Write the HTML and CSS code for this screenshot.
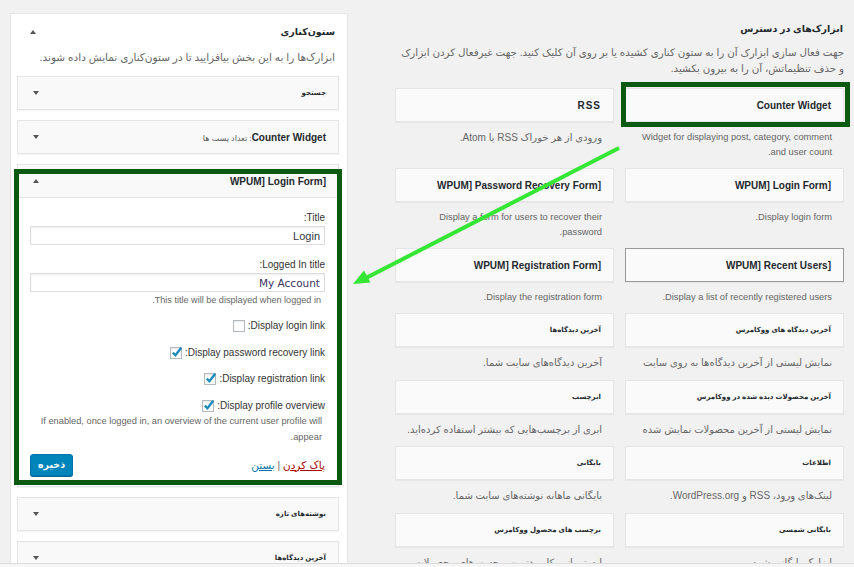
FILE: index.html
```html
<!DOCTYPE html>
<html lang="fa" dir="rtl">
<head>
  <meta charset="UTF-8">
  <meta name="viewport" content="width=device-width, initial-scale=1.0">
  <title>ابزارک‌ها</title>
  <link rel="stylesheet" href="styles.css">
</head>
<body>
  <div class="wrap">

    <!-- ابزارک‌های در دسترس -->
    <div class="available">
      <h2>ابزارک‌های در دسترس</h2>
      <p class="intro">جهت فعال سازی ابزارک آن را به ستون کناری کشیده یا بر روی آن کلیک کنید. جهت غیرفعال کردن ابزارک و حذف تنظیماتش، آن را به بیرون بکشید.</p>

      <div class="widget-list">
        <div class="item">
          <div class="widget marked"><h3>Counter Widget</h3></div>
          <p class="widget-desc">Widget for displaying post, category, comment and user count.</p>
        </div>
        <div class="item">
          <div class="widget"><h3 class="spaced">RSS</h3></div>
          <p class="widget-desc fa">ورودی از هر خوراک RSS یا Atom.</p>
        </div>

        <div class="item">
          <div class="widget"><h3>[<bdi>WPUM] Login Form</bdi></h3></div>
          <p class="widget-desc">Display login form.</p>
        </div>
        <div class="item">
          <div class="widget"><h3>[<bdi>WPUM] Password Recovery Form</bdi></h3></div>
          <p class="widget-desc">Display a form for users to recover their password.</p>
        </div>

        <div class="item">
          <div class="widget hover"><h3>[<bdi>WPUM] Recent Users</bdi></h3></div>
          <p class="widget-desc">Display a list of recently registered users.</p>
        </div>
        <div class="item">
          <div class="widget"><h3>[<bdi>WPUM] Registration Form</bdi></h3></div>
          <p class="widget-desc">Display the registration form.</p>
        </div>

        <div class="item">
          <div class="widget"><h3 class="fa">آخرین دیدگاه های ووکامرس</h3></div>
          <p class="widget-desc fa">نمایش لیستی از آخرین دیدگاه‌ها به روی سایت</p>
        </div>
        <div class="item">
          <div class="widget"><h3 class="fa">آخرین دیدگاه‌ها</h3></div>
          <p class="widget-desc fa">آخرین دیدگاه‌های سایت شما.</p>
        </div>

        <div class="item">
          <div class="widget"><h3 class="fa">آخرین محصولات دیده شده در ووکامرس</h3></div>
          <p class="widget-desc fa">نمایش لیستی از آخرین محصولات نمایش شده</p>
        </div>
        <div class="item">
          <div class="widget"><h3 class="fa">ابرچسب</h3></div>
          <p class="widget-desc fa">ابری از برچسب‌هایی که بیشتر استفاده کرده‌اید.</p>
        </div>

        <div class="item">
          <div class="widget"><h3 class="fa">اطلاعات</h3></div>
          <p class="widget-desc fa">لینک‌های ورود، RSS و WordPress.org.</p>
        </div>
        <div class="item">
          <div class="widget"><h3 class="fa">بایگانی</h3></div>
          <p class="widget-desc fa">بایگانی ماهانه نوشته‌های سایت شما.</p>
        </div>

        <div class="item">
          <div class="widget"><h3 class="fa">بایگانی شمسی</h3></div>
          <p class="widget-desc fa">ابزارک بایگانی شمسی</p>
        </div>
        <div class="item">
          <div class="widget"><h3 class="fa">برچسب های محصول ووکامرس</h3></div>
          <p class="widget-desc fa">لیستی از پرکاربردترین برچسب‌های محصولات شما در قالب ابر.</p>
        </div>
      </div>
    </div>

    <!-- ستون‌کناری -->
    <div class="sidebar">
      <div class="sidebar-head">
        <h2>ستون‌کناری</h2>
        <span class="toggle up"></span>
      </div>
      <p class="sidebar-desc">ابزارک‌ها را به این بخش بیافزایید تا در ستون‌کناری نمایش داده شوند.</p>

      <div class="swidget">
        <div class="swidget-top"><h3 class="fa">جستجو</h3><span class="toggle"></span></div>
      </div>

      <div class="swidget">
        <div class="swidget-top"><h3>Counter Widget<span class="in-title">: تعداد پست ها</span></h3><span class="toggle"></span></div>
      </div>

      <div class="swidget open marked">
        <div class="swidget-top"><h3>[<bdi>WPUM] Login Form</bdi></h3><span class="toggle up"></span></div>
        <div class="swidget-inside">
          <div class="field">
            <label>Title:</label>
            <input class="text" type="text" value="Login">
          </div>
          <div class="field">
            <label>Logged In title:</label>
            <input class="text account" type="text" value="My Account">
            <p class="hint">This title will be displayed when logged in.</p>
          </div>

          <div class="check"><label>Display login link:</label><span class="cb"></span></div>
          <div class="check"><label>Display password recovery link:</label><span class="cb"><svg viewBox="0 0 12 12"><path d="M2.6 6.2 L5 8.6 L10.4 1.6"/></svg></span></div>
          <div class="check"><label>Display registration link:</label><span class="cb"><svg viewBox="0 0 12 12"><path d="M2.6 6.2 L5 8.6 L10.4 1.6"/></svg></span></div>
          <div class="check"><label>Display profile overview:</label><span class="cb"><svg viewBox="0 0 12 12"><path d="M2.6 6.2 L5 8.6 L10.4 1.6"/></svg></span></div>
          <p class="hint wide">If enabled, once logged in, an overview of the current user profile will appear.</p>

          <div class="actions">
            <div class="links"><a class="remove" href="#">پاک کردن</a> | <a class="close" href="#">بستن</a></div>
            <button class="button-primary">ذخیره</button>
          </div>
        </div>
      </div>

      <div class="swidget">
        <div class="swidget-top"><h3 class="fa">نوشته‌های تازه</h3><span class="toggle"></span></div>
      </div>

      <div class="swidget">
        <div class="swidget-top"><h3 class="fa">آخرین دیدگاه‌ها</h3><span class="toggle"></span></div>
      </div>
    </div>
  </div>

  <svg class="arrow" width="854" height="567" viewBox="0 0 854 567">
    <line x1="619" y1="148" x2="364" y2="279"/>
    <polygon points="353,284 370.5,282.5 364,270.5"/>
  </svg>

  <div class="screen-edge"></div>
</body>
</html>
```

FILE: styles.css
```css
*, *::before, *::after {
  box-sizing: border-box;
}

html, body {
  margin: 0;
}

body {
  width: 854px;
  height: 567px;
  overflow: hidden;
  position: relative;
  background: #f1f1f1;
  color: #444;
  font-family: "Liberation Sans", "DejaVu Sans", sans-serif;
  font-size: 10px;
}

.wrap {
  display: flex;
  justify-content: space-between;
  padding: 13px 10px 0;
}

/* ابزارک‌های در دسترس */
.available {
  width: 449px;
  padding-top: 8px;
}

.available h2 {
  margin: 0;
  padding-right: 1px;
  font-size: 9.5px;
  line-height: 16px;
  color: #23282d;
}

.intro {
  margin: 8px 0 11px;
  font-size: 10.3px;
  line-height: 16px;
  color: #666;
}

.widget-list {
  display: grid;
  grid-template-columns: 219px 219px;
  column-gap: 11px;
}

.widget {
  position: relative;
  display: flex;
  align-items: center;
  height: 34px;
  padding: 0 12px;
  background: #fafafa;
  border: 1px solid #e5e5e5;
  box-shadow: 0 1px 1px rgba(0, 0, 0, 0.04);
}

.widget.hover {
  border-color: #999;
}

.widget h3,
.swidget h3 {
  margin: 0;
  font-size: 10px;
  font-weight: bold;
  color: #23282d;
  white-space: nowrap;
}

.widget h3.spaced {
  letter-spacing: 1px;
}

h3.fa {
  font-size: 7px;
}

.widget-desc {
  margin: 8px 12px;
  font-size: 9.3px;
  line-height: 15px;
  color: #666;
}

.widget-desc.fa {
  margin-bottom: 9.5px;
  font-size: 10px;
}

/* قاب سبز */
.marked::after {
  content: "";
  position: absolute;
  border: 5px solid #0c5a12;
  pointer-events: none;
}

.widget.marked::after {
  top: -7px;
  right: -7px;
  bottom: -6px;
  left: -5px;
}

.swidget.marked::after {
  top: 4px;
  right: -4px;
  bottom: 1px;
  left: -4px;
}

/* ستون‌کناری */
.sidebar {
  width: 338px;
  height: 560px;
  padding: 0 8px 0 6px;
  background: #fff;
  border: 1px solid #e5e5e5;
  box-shadow: 0 1px 1px rgba(0, 0, 0, 0.04);
}

.sidebar-head {
  display: flex;
  justify-content: space-between;
  align-items: center;
  padding: 10px 4px 0 13px;
}

.sidebar-head h2 {
  margin: 0;
  font-size: 9.5px;
  line-height: 16px;
  color: #23282d;
}

.sidebar-desc {
  margin: 9px 4px 11px 0;
  font-size: 10.5px;
  line-height: 16px;
  color: #666;
}

.toggle {
  width: 0;
  height: 0;
  border-left: 3px solid transparent;
  border-right: 3px solid transparent;
  border-top: 4px solid #555;
}

.toggle.up {
  border-top: 0;
  border-bottom: 4px solid #555;
}

.swidget {
  position: relative;
  margin-bottom: 10px;
  background: #f9f9f9;
  border: 1px solid #e5e5e5;
  box-shadow: 0 1px 1px rgba(0, 0, 0, 0.04);
}

.swidget-top {
  display: flex;
  justify-content: space-between;
  align-items: center;
  height: 32px;
  padding: 0 12px 0 15px;
}

.in-title {
  font-weight: normal;
  font-size: 8px;
  color: #555;
}

.swidget.open {
  background: #fff;
}

.swidget.open .swidget-top {
  height: 33px;
  background: #f9f9f9;
  border-bottom: 1px solid #e5e5e5;
}

.swidget-inside {
  padding: 0 13px 10px 12px;
}

.field {
  margin-top: 13px;
}

.field label {
  display: block;
  line-height: 14px;
  color: #333;
}

.text {
  display: block;
  width: 100%;
  height: 19px;
  margin: 1px 0 0;
  padding: 0 4px;
  border: 1px solid #ddd;
  box-shadow: inset 0 1px 2px rgba(0, 0, 0, 0.07);
  background: #fff;
  color: #32373c;
  font-family: "Liberation Sans", sans-serif;
  font-size: 11px;
  direction: rtl;
}

.text.account {
  font-family: "DejaVu Sans", sans-serif;
  font-size: 10.5px;
  color: #3a3560;
}

.hint {
  margin: 1px 0 0;
  padding-right: 4px;
  font-size: 9.1px;
  line-height: 14px;
  color: #666;
}

.hint.wide {
  margin: 0;
  padding-right: 3px;
  font-size: 9.25px;
  line-height: 16px;
}

.check {
  display: flex;
  align-items: center;
  gap: 3px;
  margin-top: 12px;
  line-height: 14px;
  color: #333;
}

.check + .check {
  margin-top: 12.5px;
}

.cb {
  position: relative;
  width: 12px;
  height: 12px;
  border: 1px solid #b4b9be;
  background: #fff;
  box-shadow: inset 0 1px 2px rgba(0, 0, 0, 0.1);
}

.cb svg {
  position: absolute;
  top: -2px;
  left: -1px;
  width: 13px;
  height: 13px;
  fill: none;
  stroke: #1e8cbe;
  stroke-width: 2.2;
}

.actions {
  display: flex;
  justify-content: space-between;
  align-items: center;
  margin-top: 9px;
}

.links {
  color: #666;
  font-size: 10px;
}

.links a {
  font-family: "DejaVu Sans", sans-serif;
  font-size: 10.5px;
}

.links .remove {
  color: #a00;
}

.links .close {
  color: #0073aa;
}

.button-primary {
  width: 43px;
  height: 22px;
  padding: 0;
  background: #0085ba;
  border: 1px solid #0073aa;
  border-radius: 3px;
  box-shadow: 0 1px 0 #006799;
  color: #fff;
  font-family: "DejaVu Sans", sans-serif;
  font-size: 9.5px;
  font-weight: bold;
}

/* فلش */
.arrow {
  position: absolute;
  top: 0;
  left: 0;
  pointer-events: none;
}

.arrow line {
  stroke: #35e635;
  stroke-width: 4;
}

.arrow polygon {
  fill: #35e635;
}

.screen-edge {
  position: absolute;
  left: 0;
  right: 0;
  bottom: 0;
  height: 4px;
  background: #f6f6f6;
  border-top: 1px solid #dcdcdc;
}
```
